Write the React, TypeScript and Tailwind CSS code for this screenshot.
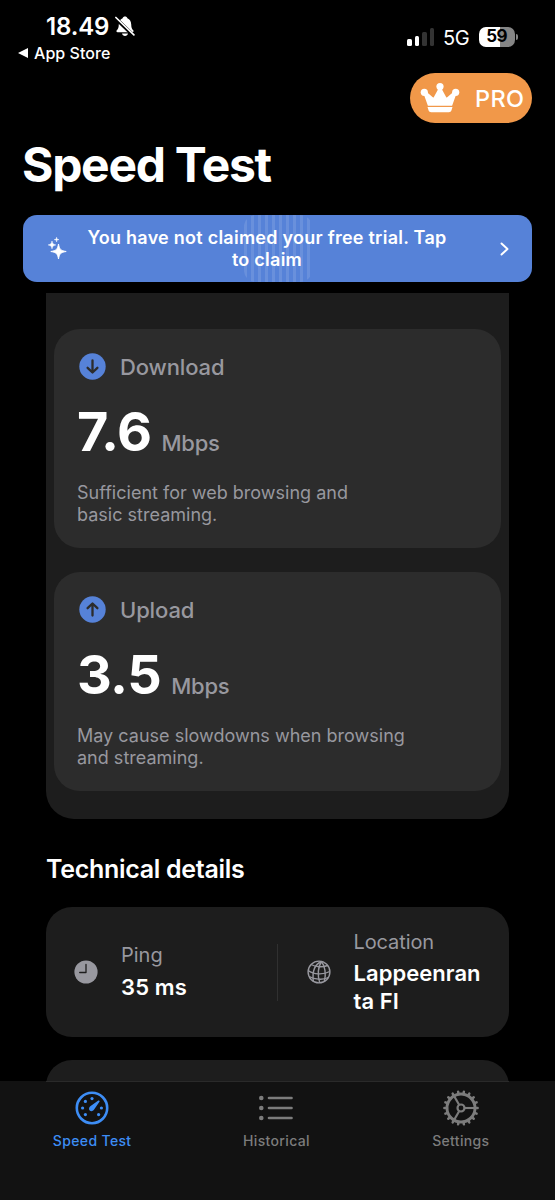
import type { ReactNode } from 'react';

const BellOff = () => (
  <svg width="20" height="21" viewBox="0 0 20 21" className="ml-[6px]">
    <path d="M10 .5c1.2 0 2.1.7 2.4 1.7 2.4.9 3.7 2.9 3.8 6 .1 3.4.6 4.5 2 6 .7.7.4 2-.8 2H2.6c-1.2 0-1.5-1.3-.8-2 1.4-1.5 1.9-2.6 2-6 .1-3.100 1.400-5.100 3.800-6C7.900 1.200 8.800.5 10 .5z" fill="white" />
    <path d="M7 17.500h6c-.3 1.600-1.500 2.500-3 2.500s-2.700-.9-3-2.500z" fill="white" />
    <path d="M.3 2l18.200 17.500" stroke="black" strokeWidth="3.800" />
    <path d="M.9 1.500l18 17.300" stroke="white" strokeWidth="1.700" strokeLinecap="round" />
  </svg>
);

const Crown = () => (
  <svg width="40" height="30" viewBox="0 0 40 30" fill="white">
    <circle cx="20" cy="3.600" r="3.600" />
    <circle cx="4.300" cy="9.300" r="3.600" />
    <circle cx="35.700" cy="9.300" r="3.600" />
    <path d="M3.500 10.500l2.300-2.200 6.700 5.800c.6.500 1 .4 1.400-.2L18.800 5h2.400l4.900 8.900c.4.6.8.7 1.400.2l6.700-5.800 2.300 2.200-4.400 12.200H7.900z" />
    <path d="M7.500 23.900h25l-1 3.300c-.4 1.300-1.300 2-2.700 2H11.200c-1.400 0-2.300-.7-2.700-2z" />
  </svg>
);

const Sparkles = () => (
  <svg width="20" height="24" viewBox="0 0 20 24" fill="white">
    <path d="M10.500 7c.9 5.300 2.200 6.600 7.700 7.500-5.500.9-6.800 2.200-7.700 7.500-.9-5.300-2.200-6.600-7.700-7.500 5.500-.9 6.800-2.200 7.700-7.500z" stroke="white" strokeWidth=".9" />
    <path d="M4 4c.5 2.700 1.100 3.400 3.800 3.900C5.100 8.400 4.500 9.100 4 11.800 3.500 9.100 2.900 8.400.2 7.900 2.900 7.400 3.500 6.700 4 4z" stroke="white" strokeWidth=".5" />
    <path d="M8.600.3c.2 1.700.6 2.100 2.300 2.300-1.700.2-2.100.6-2.300 2.300-.2-1.700-.6-2.100-2.300-2.300 1.700-.2 2.100-.6 2.300-2.300z" stroke="white" strokeWidth=".5" />
  </svg>
);

const ArrowBadge = ({ up }: { up?: boolean }) => (
  <svg width="27" height="27" viewBox="0 0 27 27" fill="none">
    <circle cx="13.500" cy="13.500" r="13.200" fill="#5682d8" />
    <path
      d={up ? 'M13.500 19.500V7.800M8.600 12.200l4.900-4.700 4.900 4.700' : 'M13.500 7.500v11.700M8.600 14.800l4.900 4.700 4.900-4.700'}
      stroke="#2c2c2c" strokeWidth="2.300" strokeLinecap="round" strokeLinejoin="round"
    />
  </svg>
);

const Clock = () => (
  <svg width="24" height="24" viewBox="0 0 24 24" fill="none">
    <circle cx="12" cy="12" r="11.600" fill="#98989f" />
    <path d="M12 4.500v8H5.700" stroke="#1d1d1d" strokeWidth="1.300" strokeLinecap="round" strokeLinejoin="round" />
  </svg>
);

const Globe = () => (
  <svg width="24" height="24" viewBox="0 0 24 24" fill="none" stroke="#98989f" strokeWidth="1.400">
    <circle cx="12" cy="12" r="10.900" />
    <path d="M14.500 1.500C8.500 4 5 10.500 6.300 21.300M14.500 1.500C11 7 10.500 15 12.700 22.800M14.500 1.500C18 6 19.300 14 17.300 21.500" />
    <path d="M4 4.500c4.500 2.600 11.500 3.100 16.500 1M1.200 10.500c5.300 4 15.300 4.600 21.500 1M2.200 16.500c5 3 14 3.800 19 1" />
  </svg>
);

const Gauge = () => (
  <svg width="34" height="34" viewBox="0 0 34 34" fill="currentColor">
    <circle cx="17" cy="17" r="15.200" fill="none" stroke="currentColor" strokeWidth="2.600" />
    {[[17, 7.6], [10.4, 10.4], [7.6, 17], [10.4, 23.6], [23.6, 23.6], [26.4, 17]].map(([x, y]) => (
      <circle key={`${x}-${y}`} cx={x} cy={y} r="1.600" />
    ))}
    <path d="M24.300 9.700c.5.5.3.9 0 1.300l-5.200 7.500c-1.300 1.900-3.200 2.100-4.400 1-1.100-1.200-.9-3 .9-4.400L23 9.700c.4-.3.9-.4 1.300 0z" />
  </svg>
);

const List = () => (
  <svg width="36" height="28" viewBox="0 0 36 28" fill="none" stroke="currentColor" strokeWidth="2.600" strokeLinecap="round">
    {[4, 14, 24].map(y => (
      <g key={y}>
        <circle cx="3.300" cy={y} r="2.300" fill="currentColor" stroke="none" />
        <path d={`M11 ${y}h22.500`} />
      </g>
    ))}
  </svg>
);

const Gear = () => (
  <svg width="36" height="36" viewBox="0 0 36 36" fill="none" stroke="currentColor">
    <circle cx="18" cy="18" r="14" strokeWidth="2.900" />
    <circle cx="18" cy="18" r="3.500" strokeWidth="2.200" />
    {Array.from({ length: 18 }, (_, i) => (
      <path key={i} d="M32 18h2.600" strokeWidth="2.500" strokeLinecap="round" transform={`rotate(${i * 20} 18 18)`} />
    ))}
    {[0, 120, 240].map(a => (
      <path key={a} d="M21.500 18H32" strokeWidth="2.100" transform={`rotate(${a} 18 18)`} />
    ))}
  </svg>
);

function SpeedCard({ up, label, value, lines }: { up?: boolean; label: string; value: string; lines: string[] }) {
  return (
    <section className="h-[219.500px] rounded-[26px] bg-[#2c2c2c] pl-[23px] pt-[24px] text-[#98989f]">
      <div className="flex h-7 items-center gap-[14.500px] pl-[1.500px]">
        <ArrowBadge up={up} />
        <h2 className="pt-px text-[22px] font-medium tracking-[-0.130px]">{label}</h2>
      </div>
      <div className="mt-[21px] flex h-[60px] items-baseline gap-[10px]">
        <span className="text-[54px] leading-[60px] font-bold tracking-[-0.600px] text-white">{value}</span>
        <span className="text-[22px] font-medium tracking-[-0.200px]">Mbps</span>
      </div>
      <p className="mt-[20px] text-[18px] leading-[22.300px] tracking-[0.010px] whitespace-nowrap">
        {lines[0]}<br />{lines[1]}
      </p>
    </section>
  );
}

function Tab({ icon, label, active }: { icon: ReactNode; label: string; active?: boolean }) {
  return (
    <div className={active ? 'flex flex-col items-center text-[#3d8df5]' : 'flex flex-col items-center text-[#7c7c7c]'}>
      <div className="flex h-[36px] items-center">{icon}</div>
      <span className="mt-[5px] text-[14px] leading-5 font-medium tracking-[0.350px]">{label}</span>
    </div>
  );
}

export default function App() {
  return (
    <div className="flex h-[1200px] w-[555px] flex-col overflow-hidden bg-black font-['Inter',sans-serif] text-white">
      <header className="flex h-[73px] shrink-0 justify-between pl-[18px] pr-[37px]">
        <div className="pt-[11px]">
          <div className="flex h-[30px] items-center pl-[28px]">
            <span className="pt-px text-[24px] leading-[30px] font-semibold tracking-[-0.150px]">18.49</span>
            <BellOff />
          </div>
          <div className="flex h-6 items-center gap-[6px]">
            <svg width="10" height="10" viewBox="0 0 10 10" fill="white"><path d="M0 5l10-5v10z" /></svg>
            <span className="text-[16px] font-medium tracking-[0.050px]">App Store</span>
          </div>
        </div>
        <div className="flex h-[74px] items-center">
          <div className="flex h-[18px] items-end gap-[3px]">
            <i className="h-[7px] w-[4.500px] rounded-[1.500px] bg-white" />
            <i className="h-[10px] w-[4.500px] rounded-[1.500px] bg-white" />
            <i className="h-[14px] w-[4.500px] rounded-[1.500px] bg-[#333]" />
            <i className="h-[18px] w-[4.500px] rounded-[1.500px] bg-[#333]" />
          </div>
          <span className="ml-[9px] w-[36px] pt-px text-[20px] tracking-[-0.500px]">5G</span>
          <div className="flex h-5 w-[36px] items-center justify-center rounded-[7px] bg-linear-to-r from-white from-59% to-[#858585] to-59% pr-px text-[17px] font-bold tracking-[-0.700px] text-black">59</div>
          <i className="ml-px h-[6px] w-[2px] rounded-r-full bg-[#858585]" />
        </div>
      </header>

      <div className="flex h-[50px] shrink-0 justify-end pr-[23px]">
        <button className="flex h-[50px] w-[122px] items-center gap-[15px] rounded-full bg-[#f19849] pl-[10px]">
          <Crown />
          <span className="pt-[2px] text-[23.500px] font-medium tracking-[0.300px]">PRO</span>
        </button>
      </div>
      <h1 className="mt-[12px] h-[58px] shrink-0 pl-[22px] text-[48px] leading-[59px] font-bold tracking-[-1.300px]">Speed Test</h1>

      <button className="relative mx-[23px] mt-[22px] flex h-[67px] shrink-0 items-center rounded-[14px] bg-[#5682d8] pl-[25px]">
        <i className="absolute top-0 left-[221px] h-full w-[68px] rounded-[12px] bg-[repeating-linear-gradient(90deg,#6990dc_0_3px,transparent_3px_7px)]" />
        <Sparkles />
        <span className="relative ml-[5px] w-[388px] text-center text-[18px] leading-[22px] font-semibold tracking-[0.250px]">You have not claimed your free trial. Tap<br />to claim</span>
        <svg className="ml-[39px]" width="9" height="14" viewBox="0 0 9 14" fill="none" stroke="white" strokeWidth="2" strokeLinecap="round" strokeLinejoin="round"><path d="M1.500 1.500L7.500 7l-6 5.500" /></svg>
      </button>

      <main className="mt-[11px] flex min-h-0 flex-1 flex-col overflow-hidden px-[46px]">
        <div className="flex h-[526px] shrink-0 flex-col gap-[23.500px] rounded-b-[28px] bg-[#1d1d1d] px-[8px] pt-[35.500px]">
          <SpeedCard label="Download" value="7.6" lines={['Sufficient for web browsing and', 'basic streaming.']} />
          <SpeedCard up label="Upload" value="3.5" lines={['May cause slowdowns when browsing', 'and streaming.']} />
        </div>
        <h2 className="mt-[34px] h-8 shrink-0 text-[25px] leading-8 font-semibold tracking-[-0.300px]">Technical details</h2>
        <section className="mt-[22px] flex h-[130px] shrink-0 items-center rounded-[26px] bg-[#1d1d1d]">
          <div className="flex w-[231px] items-center gap-[23px] pl-[28px]">
            <Clock />
            <div className="pb-[2px]">
              <div className="text-[20px] leading-[27px] text-[#98989f]">Ping</div>
              <div className="mt-[4px] text-[22px] leading-[28px] font-semibold tracking-[0.150px]">35 ms</div>
            </div>
          </div>
          <i className="h-[57px] w-px bg-[#303030]" />
          <div className="flex items-center gap-[23px] pl-[28.500px]">
            <Globe />
            <div>
              <div className="text-[20px] leading-[27px] tracking-[-0.100px] text-[#98989f]">Location</div>
              <div className="mt-[4px] text-[22px] leading-[27.500px] font-semibold tracking-[0.050px]">Lappeenran<br />ta FI</div>
            </div>
          </div>
        </section>
        <section className="mt-[23px] h-[130px] shrink-0 rounded-[26px] bg-[#1d1d1d]" />
      </main>

      <nav className="h-[119px] shrink-0 bg-[#121212]">
        <div className="mx-[46px] h-px bg-[#2a2a2a]" />
        <div className="grid grid-cols-3 pt-[8px] pr-[2px]">
          <Tab active icon={<Gauge />} label="Speed Test" />
          <Tab icon={<List />} label="Historical" />
          <Tab icon={<Gear />} label="Settings" />
        </div>
      </nav>
    </div>
  );
}
